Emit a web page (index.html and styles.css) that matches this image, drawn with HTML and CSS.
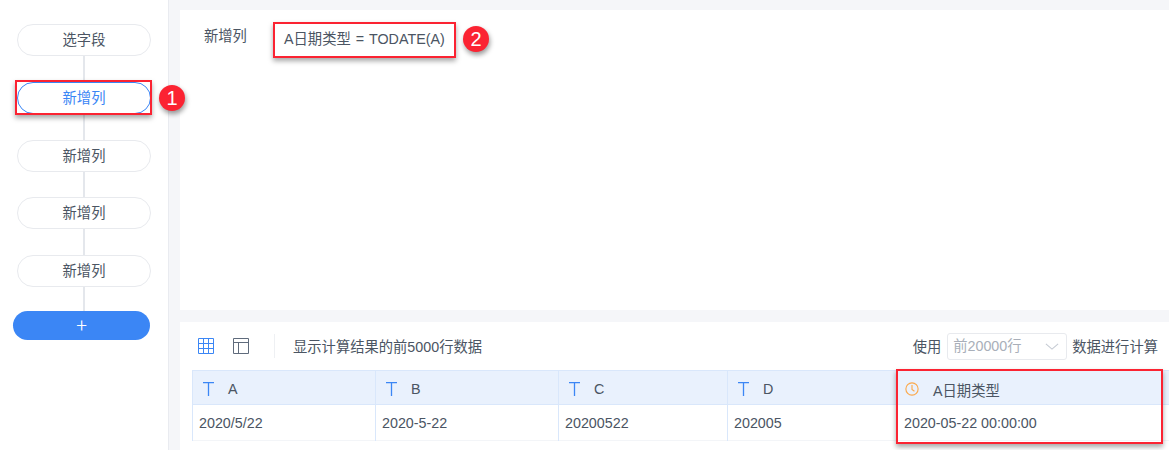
FILE: index.html
```html
<!DOCTYPE html>
<html lang="zh-CN">
<head>
    <meta charset="UTF-8">
    <title>新增列</title>
    <link rel="stylesheet" href="styles.css">
</head>
<body>
    <div class="page">
        <div class="sidebar">
            <div class="node">选字段</div>
            <div class="link"></div>
            <div class="node active">新增列
                <span class="mark mark-node"></span>
                <span class="badge badge-node">1</span>
            </div>
            <div class="link"></div>
            <div class="node">新增列</div>
            <div class="link link-short"></div>
            <div class="node">新增列</div>
            <div class="link"></div>
            <div class="node">新增列</div>
            <div class="link link-last"></div>
            <button class="add-button">+</button>
        </div>
        <div class="main">
            <div class="top-panel">
                <span class="field-label">新增列</span>
                <div class="formula">A日期类型 = TODATE(A)
                    <span class="mark"></span>
                    <span class="badge badge-formula">2</span>
                </div>
            </div>
            <div class="bottom-panel">
                <div class="toolbar">
                    <svg class="tool-icon" viewBox="0 0 16 16">
                        <path d="M.5.5h15v15H.5zM.5 5.5h15M.5 10.5h15M5.5.5v15M10.5.5v15" fill="none" stroke="#3b86f5"/>
                    </svg>
                    <svg class="tool-icon" viewBox="0 0 16 16">
                        <path d="M.5.5h15v15H.5zM.5 4.5h15M5.5 4.5v11" fill="none" stroke="#5f6b7c"/>
                    </svg>
                    <div class="divider"></div>
                    <span class="tip">显示计算结果的前5000行数据</span>
                    <span class="use">使用</span>
                    <div class="select">前20000行
                        <svg class="caret" viewBox="0 0 16 8">
                            <path d="M1 1l7 6 7-6" fill="none" stroke="#c5cad3" stroke-width="1.2"/>
                        </svg>
                    </div>
                    <span class="use">数据进行计算</span>
                </div>
                <div class="data-table">
                    <div class="col col-a">
                        <div class="head">
                            <svg class="t-icon" viewBox="0 0 11 14"><path d="M0 .7h11M5.5 .7V14" fill="none" stroke="#3b86f5" stroke-width="1.3"/></svg>A
                        </div>
                        <div class="cell">2020/5/22</div>
                    </div>
                    <div class="col col-b">
                        <div class="head">
                            <svg class="t-icon" viewBox="0 0 11 14"><path d="M0 .7h11M5.5 .7V14" fill="none" stroke="#3b86f5" stroke-width="1.3"/></svg>B
                        </div>
                        <div class="cell">2020-5-22</div>
                    </div>
                    <div class="col col-c">
                        <div class="head">
                            <svg class="t-icon" viewBox="0 0 11 14"><path d="M0 .7h11M5.5 .7V14" fill="none" stroke="#3b86f5" stroke-width="1.3"/></svg>C
                        </div>
                        <div class="cell">20200522</div>
                    </div>
                    <div class="col col-d">
                        <div class="head">
                            <svg class="t-icon" viewBox="0 0 11 14"><path d="M0 .7h11M5.5 .7V14" fill="none" stroke="#3b86f5" stroke-width="1.3"/></svg>D
                        </div>
                        <div class="cell">202005</div>
                    </div>
                    <div class="col col-e">
                        <div class="head">
                            <svg class="clock" viewBox="0 0 16 16">
                                <circle cx="8" cy="8" r="7" fill="none" stroke="#fba94c" stroke-width="1.3"/>
                                <path d="M8 3.5v5l2.8 2" fill="none" stroke="#fba94c" stroke-width="1.3"/>
                            </svg>A日期类型
                        </div>
                        <div class="cell">2020-05-22 00:00:00</div>
                        <span class="mark mark-col"></span>
                    </div>
                </div>
            </div>
        </div>
    </div>
</body>
</html>
```

FILE: styles.css
```css
html, body {
    height: 100%;
}
body {
    margin: 0;
    font-family: "Liberation Sans", "Noto Sans CJK SC", sans-serif;
    font-size: 14.3px;
    color: #4b5563;
    background: #fff;
    overflow: hidden;
}
.page {
    display: flex;
    height: 450px;
}
.sidebar {
    width: 169px;
    padding-top: 24px;
    padding-left: 17px;
    box-sizing: border-box;
    border-right: 1px solid #e9ebf0;
    flex-shrink: 0;
}
.node {
    position: relative;
    width: 134px;
    height: 32px;
    line-height: 31px;
    box-sizing: border-box;
    text-align: center;
    border: 1px solid #e8eaee;
    border-radius: 16px;
    background: #fff;
}
.node.active {
    color: #3b86f5;
    border-color: #3b86f5;
}
.link {
    width: 2px;
    height: 26px;
    margin-left: 66px;
    background: #e4e7ec;
}
.link-short {
    height: 25px;
}
.link-last {
    height: 24px;
}
.add-button {
    display: block;
    width: 137px;
    height: 29px;
    margin-left: -4px;
    padding: 0;
    border: none;
    border-radius: 15px;
    background: #3b86f5;
    color: #fff;
    font-family: Roboto, sans-serif;
    font-size: 19px;
    font-weight: 300;
    line-height: 28px;
}
.main {
    flex: 1;
    background: #f5f6f9;
    padding: 10px 0 0 11px;
    min-width: 0;
}
.top-panel {
    display: flex;
    align-items: flex-start;
    height: 300px;
    margin-bottom: 12px;
    padding: 17px 0 0 24px;
    box-sizing: border-box;
    background: #fff;
}
.field-label {
    line-height: 18px;
    width: 69px;
}
.formula {
    position: relative;
    margin-top: -5px;
    width: 183px;
    height: 36px;
    line-height: 34px;
    padding-left: 11px;
    box-sizing: border-box;
    white-space: nowrap;
    word-spacing: 1px;
}
.mark {
    position: absolute;
    top: 0;
    left: 0;
    right: 0;
    bottom: 0;
    border: 2px solid #fb2332;
    box-shadow: 0 3px 5px rgba(0, 0, 0, 0.35);
}
.mark-node {
    top: -3px;
    left: -3px;
    right: -2px;
    bottom: -2px;
}
.mark-col {
    top: -1px;
    left: -4px;
    right: 6px;
    bottom: -3px;
}
.badge {
    position: absolute;
    width: 26px;
    height: 26px;
    line-height: 26px;
    border-radius: 50%;
    background: #fb2332;
    color: #fff;
    font-size: 20px;
    text-align: center;
    box-shadow: 1px 3px 5px rgba(0, 0, 0, 0.4);
}
.badge-node {
    top: 2px;
    left: 141px;
}
.badge-formula {
    top: 4px;
    left: 190px;
}
.bottom-panel {
    height: 128px;
    background: #fff;
    padding-left: 12px;
}
.toolbar {
    display: flex;
    align-items: center;
    height: 48px;
    padding-left: 6px;
}
.tool-icon {
    width: 16px;
    height: 16px;
    margin-right: 19px;
    flex-shrink: 0;
}
.tool-icon + .tool-icon {
    margin-right: 25px;
}
.divider {
    width: 1px;
    height: 24px;
    margin-right: 18px;
    background: #eef0f3;
}
.tip {
    flex: 1;
    padding-bottom: 2px;
}
.use {
    white-space: nowrap;
    padding-bottom: 1px;
}
.use:last-child {
    margin-right: 11px;
}
.select {
    position: relative;
    width: 120px;
    height: 27px;
    line-height: 25px;
    margin: 0 5px 0 6px;
    padding-left: 5px;
    box-sizing: border-box;
    border: 1px solid #e8eaee;
    border-radius: 3px;
    color: #a9afb9;
}
.caret {
    position: absolute;
    top: 9px;
    right: 7px;
    width: 14px;
    height: 7px;
}
.data-table {
    display: flex;
}
.col {
    position: relative;
    box-sizing: border-box;
    border-left: 1px solid #d9e7fb;
}
.col-a { width: 183px; }
.col-b { width: 183px; }
.col-c { width: 169px; }
.col-d { width: 173px; }
.col-e {
    width: 269px;
    border-left: none;
}
.head {
    height: 35px;
    padding: 3px 0 0 10px;
    box-sizing: border-box;
    background: #e9f1fd;
    border-top: 1px solid #d9e7fb;
    border-bottom: 1px solid #d9e7fb;
    display: flex;
    align-items: center;
}
.t-icon {
    width: 11px;
    height: 14px;
    margin-right: 14px;
}
.clock {
    width: 14px;
    height: 14px;
    margin: 0 14px 0 -5px;
    flex-shrink: 0;
}
.cell {
    height: 36px;
    line-height: 37px;
    padding-left: 6px;
    border-bottom: 1px solid #f3f5f8;
    box-sizing: border-box;
    white-space: nowrap;
}
.col-e .cell {
    padding-left: 4px;
}
```
